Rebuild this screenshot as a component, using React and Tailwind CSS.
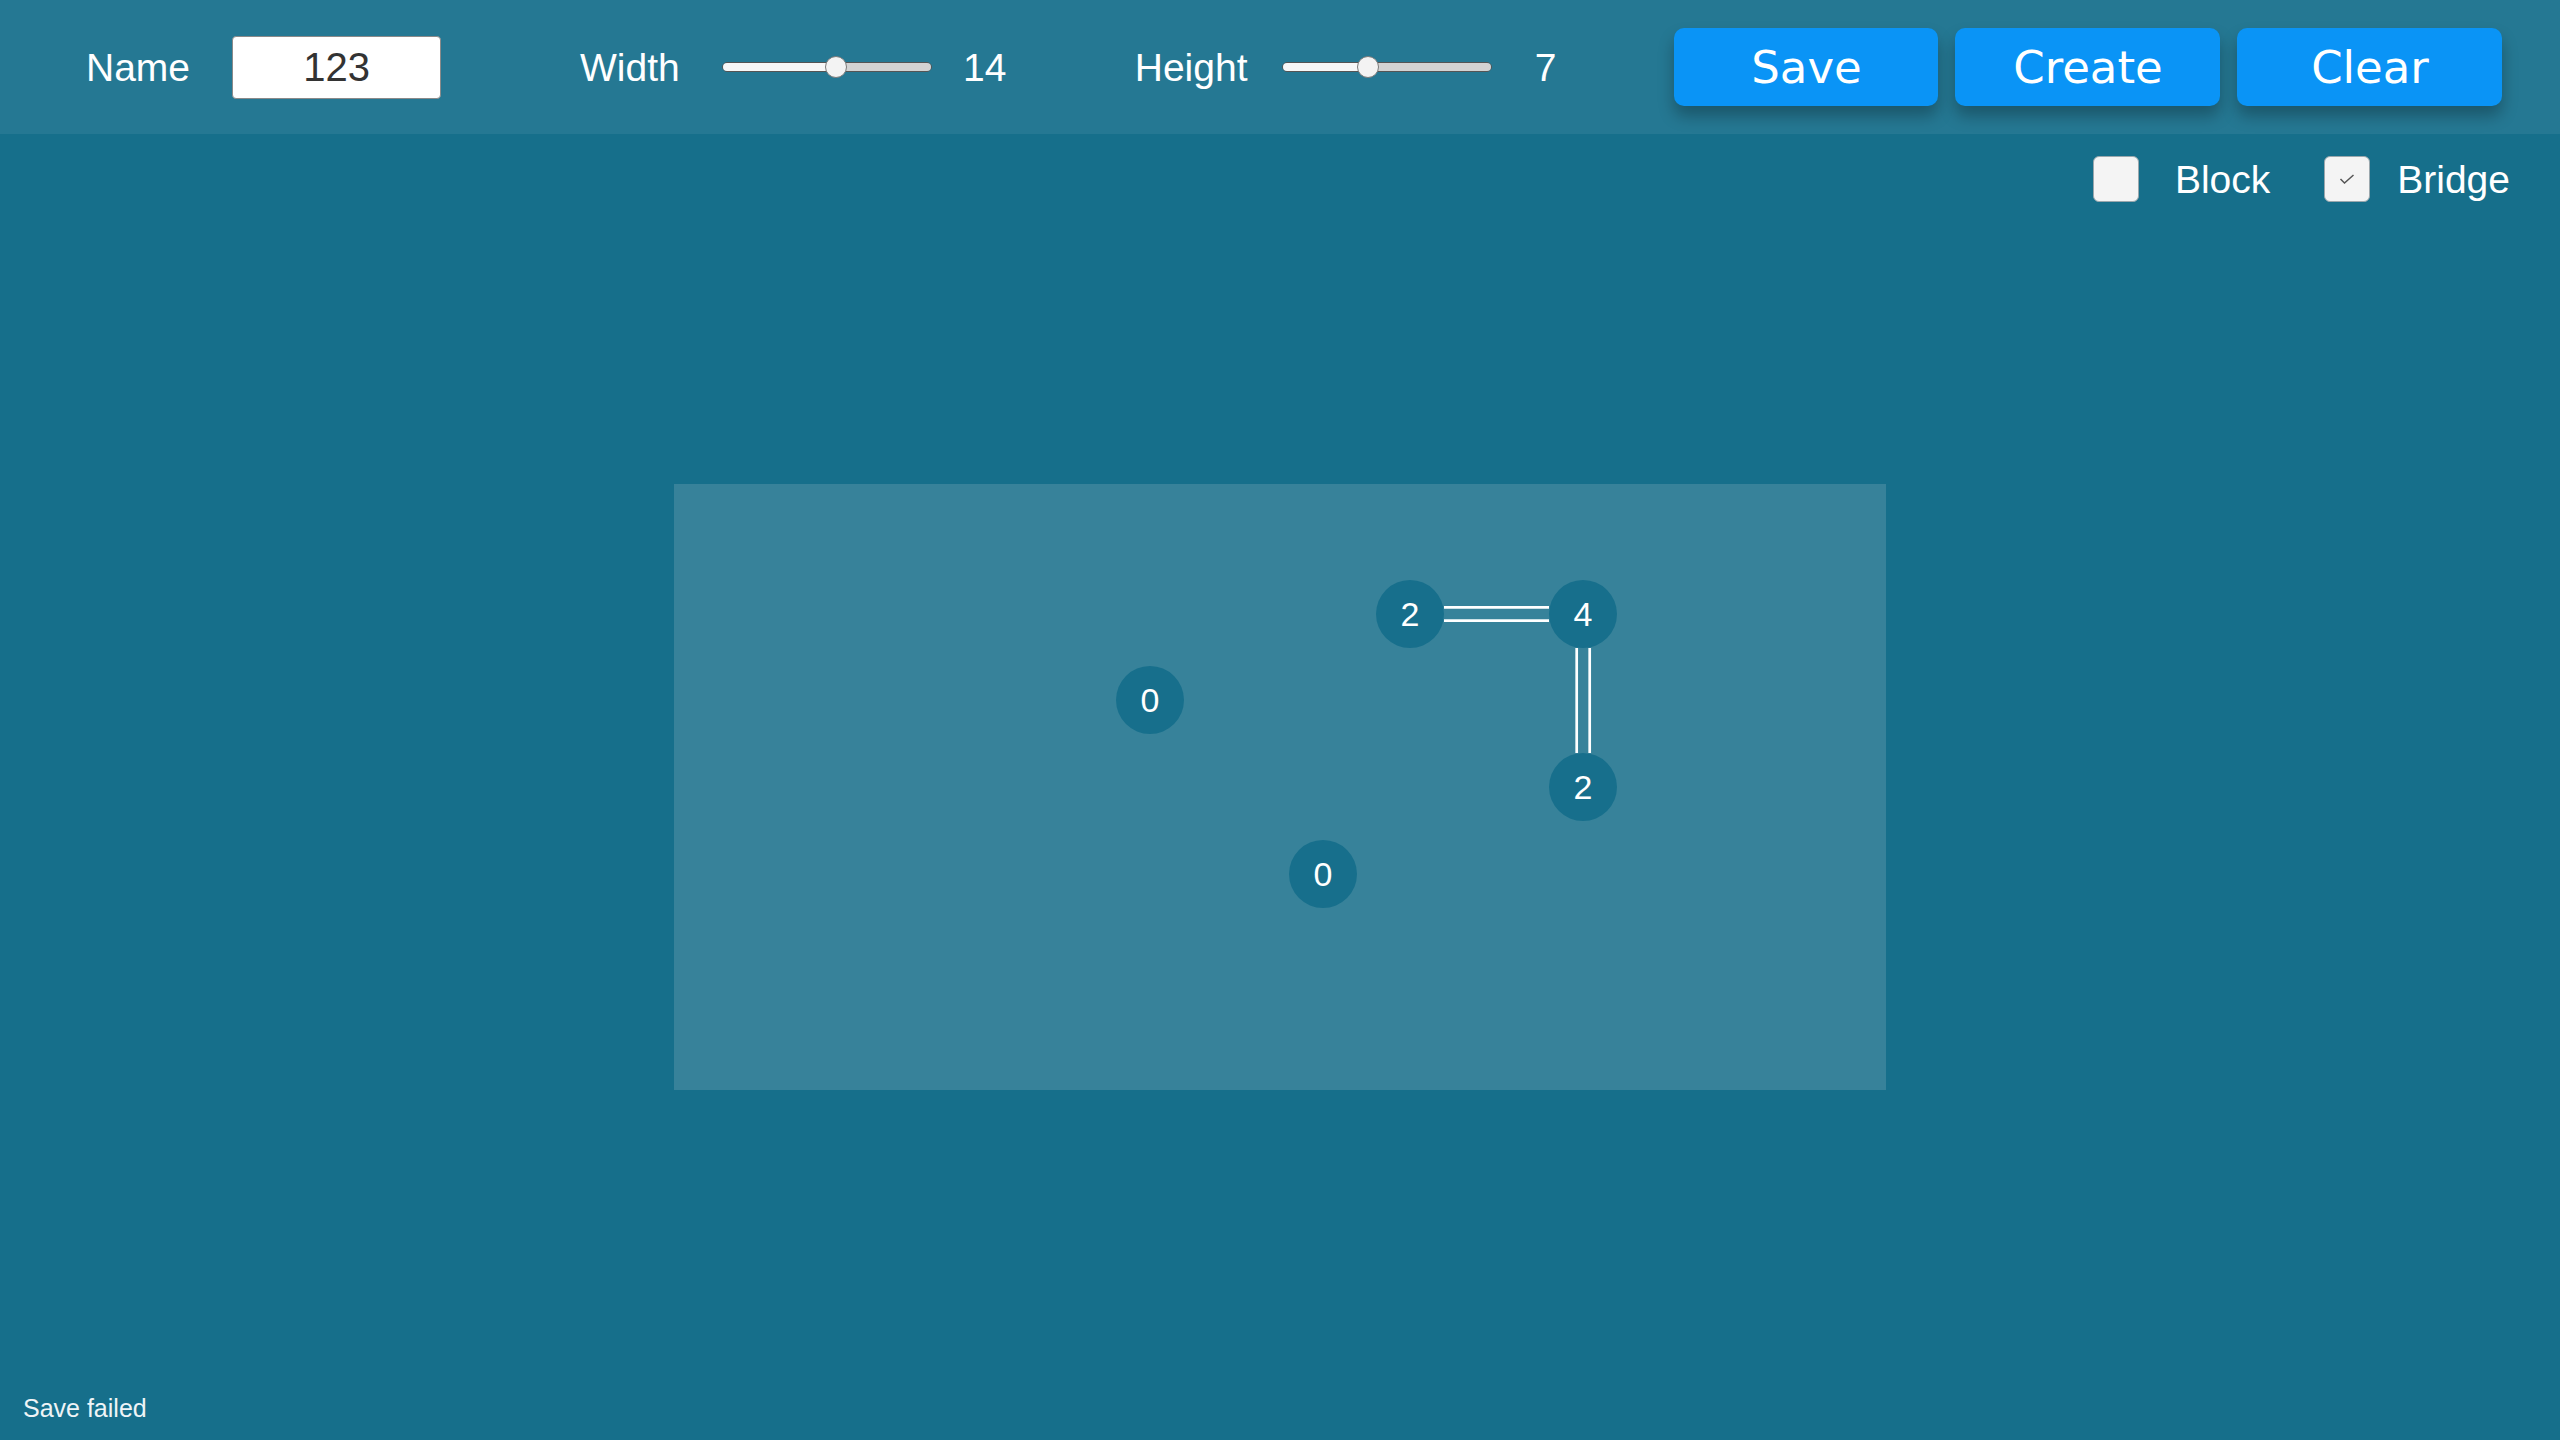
import React from "react";

function Slider({ fill, thumb }) {
  return (
    <div className="relative w-[210px] h-[22px] flex items-center">
      <div className="flex w-full h-[10px] rounded-full border border-[#555] overflow-hidden">
        <div className={`${fill} h-full bg-[#f7f7f7]`} />
        <div className="flex-1 h-full bg-[#d3d3d3]" />
      </div>
      <div className={`absolute top-0 ${thumb} w-[22px] h-[22px] rounded-full bg-[#f3f3f3] border border-[#7a7a7a]`} />
    </div>
  );
}

function Node({ pos, label }) {
  return (
    <div
      className={`absolute ${pos} w-[68px] h-[68px] rounded-full bg-[#176f8c] flex items-center justify-center text-white text-[34px] leading-none font-['Liberation_Sans',Arial,sans-serif]`}
    >
      {label}
    </div>
  );
}

function Check({ checked, label, className, gap }) {
  return (
    <div className={`flex items-center ${className || ""}`}>
      <div className="w-[46px] h-[46px] rounded-[6px] bg-[#f4f4f4] border border-[#9aa7ad] flex items-center justify-center">
        {checked && (
          <svg width="16" height="10" viewBox="0 0 16 10">
            <path d="M1.5 5 L5.5 9 L14.5 1" fill="none" stroke="#555" strokeWidth="1.5" />
          </svg>
        )}
      </div>
      <span className={`${gap} text-[39px] leading-none text-white`}>{label}</span>
    </div>
  );
}

export default function App() {
  return (
    <div className="w-[2560px] h-[1440px] flex flex-col bg-[#166f8b] font-['Liberation_Sans',Arial,sans-serif] overflow-hidden">
      <header className="h-[134px] shrink-0 bg-[#257893] flex items-center pl-[86px] text-white">
        <span className="text-[39px] leading-none">Name</span>
        <div className="ml-[42px] w-[209px] h-[63px] bg-white rounded-[4px] border border-[#8a8a8a] flex items-center justify-center text-[40px] leading-none text-[#333]">
          123
        </div>
        <span className="ml-[139px] text-[39px] leading-none">Width</span>
        <div className="ml-[42px]">
          <Slider fill="w-[114px]" thumb="left-[103px]" />
        </div>
        <div className="ml-[13px] w-[80px] text-center text-[39px] leading-none">14</div>
        <span className="ml-[110px] text-[39px] leading-none">Height</span>
        <div className="ml-[35px]">
          <Slider fill="w-[86px]" thumb="left-[75px]" />
        </div>
        <div className="ml-[13px] w-[80px] text-center text-[39px] leading-none">7</div>
        <div className="ml-[89px] flex gap-[17px] font-['DejaVu_Sans',sans-serif]">
          <button className="w-[264px] h-[78px] rounded-[10px] bg-[#0a94f6] text-white text-[45px] leading-none shadow-[0_10px_16px_rgba(0,0,0,0.28)]">
            Save
          </button>
          <button className="w-[265px] h-[78px] rounded-[10px] bg-[#0a94f6] text-white text-[45px] leading-none shadow-[0_10px_16px_rgba(0,0,0,0.28)]">
            Create
          </button>
          <button className="w-[265px] h-[78px] rounded-[10px] bg-[#0a94f6] text-white text-[45px] leading-none shadow-[0_10px_16px_rgba(0,0,0,0.28)]">
            Clear
          </button>
        </div>
      </header>
      <main className="flex-1 grid">
        <div className="[grid-area:1/1] self-start justify-self-end mt-[22px] mr-[50px] flex items-center">
          <Check label="Block" gap="ml-[36px]" />
          <Check label="Bridge" checked gap="ml-[27px]" className="ml-[54px]" />
        </div>
        <div className="[grid-area:1/1] self-center justify-self-center relative w-[1212px] h-[606px] bg-[#37829a]">
          <svg className="absolute inset-0" width="1212" height="606" viewBox="0 0 1212 606">
            <g stroke="#ffffff" strokeWidth="2.7">
              <line x1="770" y1="123.3" x2="875" y2="123.3" />
              <line x1="770" y1="136.7" x2="875" y2="136.7" />
              <line x1="902.7" y1="164" x2="902.7" y2="269" />
              <line x1="915.7" y1="164" x2="915.7" y2="269" />
            </g>
          </svg>
          <Node pos="left-[442px] top-[182px]" label="0" />
          <Node pos="left-[615px] top-[356px]" label="0" />
          <Node pos="left-[702px] top-[96px]" label="2" />
          <Node pos="left-[875px] top-[96px]" label="4" />
          <Node pos="left-[875px] top-[269px]" label="2" />
        </div>
        <div className="[grid-area:1/1] self-end justify-self-start ml-[23px] mb-[19px] text-[25px] leading-none text-[#eef4f7]">
          Save failed
        </div>
      </main>
    </div>
  );
}
